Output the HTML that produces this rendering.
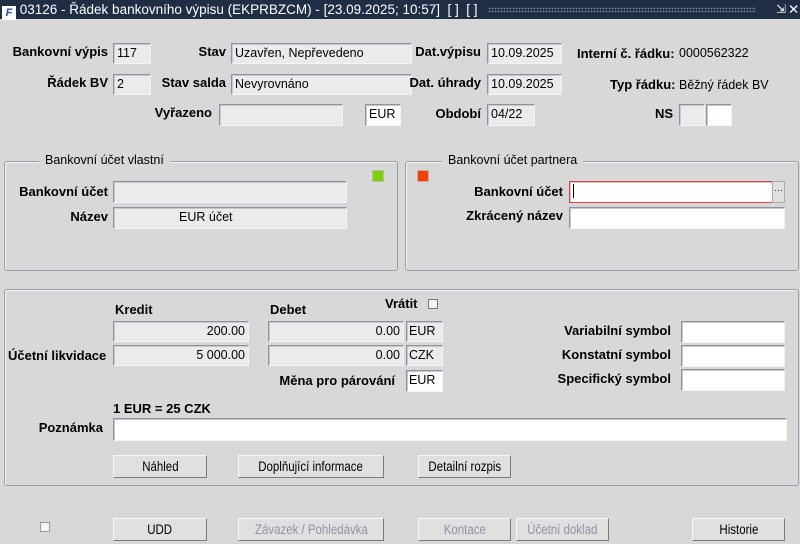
<!DOCTYPE html><html><head><meta charset="utf-8"><style>
*{box-sizing:border-box;margin:0;padding:0}
body{width:800px;height:544px;background:#d8d8d8;font-family:"Liberation Sans",Arial,sans-serif;font-size:12px;color:#000;position:relative;overflow:hidden}
.a{position:absolute;white-space:nowrap}
.t{position:absolute;left:0;top:0;width:800px;height:19px;background:#1f2d45;color:#fff;font-size:13.5px;line-height:19px}
.b{font-weight:bold;font-size:13px}
.r{text-align:right}
.f{position:absolute;background:#ebebeb;border:1px solid;border-color:#8a94a6 #f4f4f4 #f4f4f4 #8a94a6;box-shadow:inset 1px 1px 0 #c8c8c8;padding:2px 3px;font-size:12.5px;line-height:15px;overflow:hidden}
.w{background:#fff}
.g{position:absolute;border:1px solid #9aa0aa;border-radius:3px;box-shadow:1px 1px 0 #f2f2f2 inset}
.gt{position:absolute;background:#d8d8d8;padding:0 6px;font-size:12.5px}
.btn{position:absolute;height:23px;background:#e0e0e0;border:1px solid;border-color:#f8f8f8 #7c7c7c #7c7c7c #f8f8f8;text-align:center;line-height:21px;font-size:13.5px}
.btn span{display:inline-block;transform:scaleX(.85)}
.dis{color:#8d94a3}
.cb{position:absolute;width:10px;height:10px;border:1px solid #777;background:#f4f4f4}
</style></head><body>
<div class="t"><span style="display:inline-block;width:14px;height:14px;background:#fff;color:#1a4fb0;font-size:11px;line-height:14px;text-align:center;vertical-align:-2px;margin-left:2px;font-style:italic;font-weight:bold">F</span> 03126 - Řádek bankovního výpisu (EKPRBZCM) - [23.09.2025; 10:57]&nbsp; [ ]&nbsp; [ ]
<span style="position:absolute;left:488px;top:7px;width:268px;height:6px;background-image:radial-gradient(#6a7790 0.8px,transparent 1px);background-size:3px 3px"></span>
<span style="position:absolute;left:776px;top:0;font-size:12px">⇲</span><span style="position:absolute;left:788px;top:0">✕</span></div>

<div class="a b r" style="right:692px;top:44px">Bankovní výpis</div>
<div class="f" style="left:113px;top:43px;width:38px;height:21px">117</div>
<div class="a b r" style="right:574px;top:44px">Stav</div>
<div class="f" style="left:231px;top:43px;width:181px;height:21px">Uzavřen, Nepřevedeno</div>
<div class="a b r" style="right:319px;top:44px">Dat.výpisu</div>
<div class="f" style="left:487px;top:43px;width:75px;height:21px">10.09.2025</div>
<div class="a b" style="left:577px;top:46px">Interní č. řádku:</div>
<div class="a" style="left:679px;top:46px;font-size:12.5px">0000562322</div>

<div class="a b r" style="right:692px;top:75px">Řádek BV</div>
<div class="f" style="left:113px;top:74px;width:38px;height:21px">2</div>
<div class="a b r" style="right:574px;top:75px">Stav salda</div>
<div class="f" style="left:231px;top:74px;width:181px;height:21px">Nevyrovnáno</div>
<div class="a b r" style="right:319px;top:75px">Dat. úhrady</div>
<div class="f" style="left:487px;top:74px;width:75px;height:21px">10.09.2025</div>
<div class="a b" style="left:610px;top:77px">Typ řádku:</div>
<div class="a" style="left:679px;top:78px;font-size:12.5px">Běžný řádek BV</div>

<div class="a b r" style="right:588px;top:105px">Vyřazeno</div>
<div class="f" style="left:219px;top:104px;width:124px;height:22px"></div>
<div class="f w" style="left:365px;top:104px;width:36px;height:22px">EUR</div>
<div class="a b r" style="right:319px;top:106px">Období</div>
<div class="f" style="left:487px;top:104px;width:48px;height:22px">04/22</div>
<div class="a b r" style="right:127px;top:106px">NS</div>
<div class="f" style="left:679px;top:104px;width:26px;height:22px"></div>
<div class="f w" style="left:706px;top:104px;width:26px;height:22px"></div>

<div class="g" style="left:4px;top:161px;width:394px;height:110px"></div>
<div class="gt" style="left:39px;top:153px">Bankovní účet vlastní</div>
<div class="a" style="left:372px;top:170px;width:12px;height:12px;background:#7fd000;border:1px solid #b8b8b8"></div>
<div class="a b r" style="right:692px;top:184px">Bankovní účet</div>
<div class="f" style="left:113px;top:181px;width:234px;height:22px"></div>
<div class="a b r" style="right:692px;top:209px">Název</div>
<div class="f" style="left:113px;top:207px;width:234px;height:22px;padding-left:65px">EUR účet</div>

<div class="g" style="left:405px;top:161px;width:394px;height:110px"></div>
<div class="gt" style="left:442px;top:153px">Bankovní účet partnera</div>
<div class="a" style="left:417px;top:170px;width:12px;height:12px;background:#ff3c00;border:1px solid #b8b8b8"></div>
<div class="a b r" style="right:237px;top:184px">Bankovní účet</div>
<div class="f w" style="left:569px;top:181px;width:204px;height:22px;border:1px solid #e04040"><span style="display:inline-block;width:1px;height:14px;background:#000"></span></div>
<div class="a" style="left:772px;top:181px;width:13px;height:22px;background:#e0e0e0;border:1px solid #aaa;font-size:9px;text-align:center;line-height:16px">···</div>
<div class="a b r" style="right:237px;top:208px">Zkrácený název</div>
<div class="f w" style="left:569px;top:207px;width:216px;height:22px"></div>

<div class="g" style="left:4px;top:289px;width:795px;height:197px"></div>
<div class="a b" style="left:115px;top:302px">Kredit</div>
<div class="a b" style="left:270px;top:302px">Debet</div>
<div class="a b" style="left:385px;top:296px">Vrátit</div>
<div class="cb" style="left:428px;top:299px"></div>
<div class="f r" style="left:113px;top:321px;width:136px;height:21px">200.00</div>
<div class="f r" style="left:268px;top:321px;width:136px;height:21px">0.00</div>
<div class="f" style="left:406px;top:321px;width:37px;height:21px;padding-left:2px">EUR</div>
<div class="a b" style="left:8px;top:348px">Účetní likvidace</div>
<div class="f r" style="left:113px;top:345px;width:136px;height:21px">5 000.00</div>
<div class="f r" style="left:268px;top:345px;width:136px;height:21px">0.00</div>
<div class="f" style="left:406px;top:345px;width:37px;height:21px;padding-left:2px">CZK</div>
<div class="a b r" style="right:405px;top:373px">Měna pro párování</div>
<div class="f w" style="left:406px;top:370px;width:37px;height:22px;padding-left:2px">EUR</div>
<div class="a b r" style="right:129px;top:323px">Variabilní symbol</div>
<div class="f w" style="left:681px;top:321px;width:104px;height:22px"></div>
<div class="a b r" style="right:129px;top:347px">Konstatní symbol</div>
<div class="f w" style="left:681px;top:345px;width:104px;height:22px"></div>
<div class="a b r" style="right:129px;top:371px">Specifický symbol</div>
<div class="f w" style="left:681px;top:369px;width:104px;height:22px"></div>
<div class="a b" style="left:113px;top:401px">1 EUR = 25 CZK</div>
<div class="a b r" style="right:697px;top:420px">Poznámka</div>
<div class="f w" style="left:113px;top:418px;width:674px;height:23px"></div>
<div class="btn" style="left:113px;top:455px;width:94px"><span>Náhled</span></div>
<div class="btn" style="left:238px;top:455px;width:146px"><span>Doplňující informace</span></div>
<div class="btn" style="left:418px;top:455px;width:93px"><span>Detailní rozpis</span></div>

<div class="cb" style="left:40px;top:522px;border-color:#999"></div>
<div class="btn" style="left:113px;top:518px;width:94px"><span>UDD</span></div>
<div class="btn dis" style="left:238px;top:518px;width:146px"><span>Závazek / Pohledávka</span></div>
<div class="btn dis" style="left:418px;top:518px;width:93px"><span>Kontace</span></div>
<div class="btn dis" style="left:516px;top:518px;width:93px"><span>Účetní doklad</span></div>
<div class="btn" style="left:692px;top:518px;width:93px"><span>Historie</span></div>
</body></html>
